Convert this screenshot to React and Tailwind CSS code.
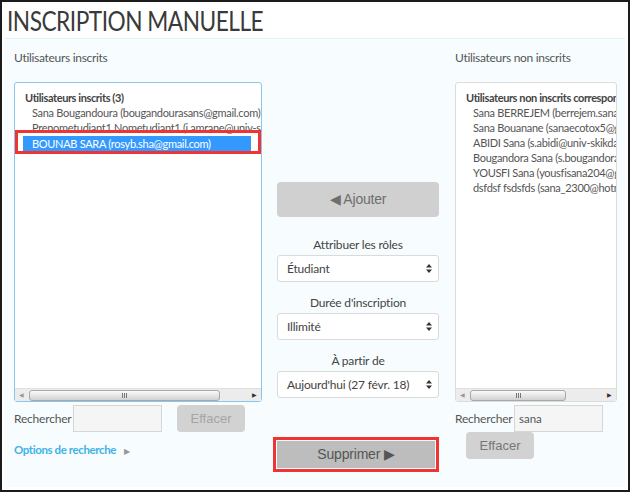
import React from 'react'

const font = { fontFamily: 'Lato, "Open Sans", sans-serif' }
const btnFont = { fontFamily: '"Liberation Sans", Arial, sans-serif' }

function Scrollbar({ thumbLeft, thumbWidth }) {
  return (
    <div className="absolute left-0 right-0 bottom-0 h-[13px] bg-[#ececec] border-t border-[#e0e0e0]">
      <span className="absolute left-[4px] top-[3px] text-[6px] text-[#999] leading-none">◀</span>
      <div
        className="absolute top-[1px] h-[11px] rounded-[3px] border border-[#a8a8a8] bg-gradient-to-b from-[#fbfbfb] to-[#d2d2d2] flex items-center justify-center"
        style={{ left: thumbLeft, width: thumbWidth }}
      >
        <div className="flex gap-[1px]">
          <div className="w-[1px] h-[5px] bg-[#777]" />
          <div className="w-[1px] h-[5px] bg-[#777]" />
          <div className="w-[1px] h-[5px] bg-[#777]" />
        </div>
      </div>
      <span className="absolute right-[4px] top-[3px] text-[6px] text-[#333] leading-none">▶</span>
    </div>
  )
}

function ListBox({ title, items, selected, focused, boxed, thumbLeft, thumbWidth }) {
  return (
    <div
      className={`relative h-[320px] bg-white rounded-[3px] border ${
        focused ? 'border-[#8cc4ec]' : 'border-[#dcdcdc]'
      }`}
    >
      <div className="overflow-hidden h-full pt-[7px]">
        <div className="pl-[10px] whitespace-nowrap text-[11px] leading-[15px] font-bold tracking-[-0.4px] text-[#444]">{title}</div>
        {items.map((it, i) => (
          <div
            key={i}
            className={`whitespace-nowrap text-[11px] tracking-[-0.3px] leading-[15px] ${
              i === selected
                ? 'ml-[8px] mr-[10px] pl-[9px] bg-[#3399ff] text-white h-[16px] mt-[1px]'
                : 'pl-[17px] text-[#555]'
            }`}
          >
            {it}
          </div>
        ))}
      </div>
      {boxed && (
        <div className="absolute left-[0px] top-[47px] w-[246px] h-[24px] border-[3px] border-[#f03434]" />
      )}
      <Scrollbar thumbLeft={thumbLeft} thumbWidth={thumbWidth} />
    </div>
  )
}

function UpDown() {
  return (
    <svg width="6" height="9" viewBox="0 0 6 9" className="shrink-0">
      <path d="M3 0L6 3.5H0z M3 9L0 5.5H6z" fill="#333" />
    </svg>
  )
}

function Select({ value }) {
  return (
    <div className="h-[27px] bg-white border border-[#dadada] rounded-[3px] flex items-center justify-between pl-[9px] pr-[6px] text-[12px] tracking-[-0.2px] text-[#444]">
      <span>{value}</span>
      <UpDown />
    </div>
  )
}

export default function App() {
  return (
    <div className="w-[630px] h-[492px] bg-white border-2 border-[#1b1b1b] flex flex-col overflow-hidden" style={font}>
      {/* Title */}
      <div className="h-[36px] pl-[5px] flex items-center">
        <h1 className="text-[27px] text-[#3a3a3a] tracking-[-0.6px] leading-none origin-left scale-x-[0.84] whitespace-nowrap">
          INSCRIPTION MANUELLE
        </h1>
      </div>

      {/* Panel */}
      <div className="mx-[3px] mb-[3px] flex-1 bg-[#f7fdfe] border-t border-[#e4f1f5] flex pl-[9px] overflow-hidden">
        {/* Left column */}
        <div className="w-[248px] shrink-0 pt-[11px]">
          <div className="text-[12px] tracking-[-0.3px] text-[#555] leading-[16px]">Utilisateurs inscrits</div>
          <div className="mt-[16px]">
            <ListBox
              title="Utilisateurs inscrits (3)"
              items={[
                'Sana Bougandoura (bougandourasans@gmail.com)',
                'Prenometudiant1 Nometudiant1 (i.amrane@univ-skikda.dz)',
                'BOUNAB SARA (rosyb.sha@gmail.com)',
              ]}
              selected={2}
              focused
              boxed
              thumbLeft={14}
              thumbWidth={191}
            />
          </div>
          <div className="flex items-center mt-[3px]">
            <span className="text-[12px] tracking-[-0.2px] text-[#555] w-[59px]">Rechercher</span>
            <div className="w-[89px] h-[27px] bg-[#f5f5f5] border border-[#d6d6d6]" />
            <button className="ml-[15px] w-[68px] h-[27px] rounded-[4px] bg-[#d2d2d2] text-[13px] text-[#a5a5a5]" style={btnFont}>
              Effacer
            </button>
          </div>
          <div className="flex items-center mt-[9px] gap-[8px]">
            <span className="text-[11.5px] font-bold tracking-[-0.4px] text-[#3fb2e6]">Options de recherche</span>
            <span className="text-[8px] text-[#999] mt-[2px]">▶</span>
          </div>
        </div>

        {/* Middle column */}
        <div className="w-[162px] shrink-0 ml-[15px] pt-[143px] flex flex-col text-[12px] tracking-[-0.2px] text-[#444]">
          <button className="h-[35px] rounded-[4px] bg-[#d0d0d0] text-[14px] text-[#6e6e6e]" style={btnFont}>
            ◀ Ajouter
          </button>
          <div className="text-center mt-[20px] leading-[16px]">Attribuer les rôles</div>
          <div className="mt-[2px]"><Select value="Étudiant" /></div>
          <div className="text-center mt-[13px] leading-[16px]">Durée d'inscription</div>
          <div className="mt-[2px]"><Select value="Illimité" /></div>
          <div className="text-center mt-[13px] leading-[16px]">À partir de</div>
          <div className="mt-[2px]"><Select value="Aujourd'hui (27 févr. 18)" /></div>
          <div className="relative mt-[43px] h-[27px]">
            <div className="absolute -left-[4px] -top-[4px] w-[166px] h-[35px] border-[3px] border-[#f03434]" />
            <button className="w-[158px] h-[27px] bg-[#bdbdbd] text-[14px] text-[#555]" style={btnFont}>
              Supprimer ▶
            </button>
          </div>
        </div>

        {/* Right column */}
        <div className="w-[170px] shrink-0 ml-[16px] pt-[11px]">
          <div className="text-[12px] tracking-[-0.3px] text-[#555] leading-[16px]">Utilisateurs non inscrits</div>
          <div className="mt-[16px] w-[162px]">
            <ListBox
              title="Utilisateurs non inscrits correspondant à « sana » (6)"
              items={[
                'Sana BERREJEM (berrejem.sana@gmail.com)',
                'Sana Bouanane (sanaecotox5@gmail.com)',
                'ABIDI Sana (s.abidi@univ-skikda.dz)',
                'Bougandora Sana (s.bougandora@gmail.com)',
                'YOUSFI Sana (yousfisana204@gmail.com)',
                'dsfdsf fsdsfds (sana_2300@hotmail.com)',
              ]}
              selected={-1}
              thumbLeft={14}
              thumbWidth={96}
            />
          </div>
          <div className="flex items-center mt-[3px]">
            <span className="text-[12px] tracking-[-0.2px] text-[#555] w-[59px]">Rechercher</span>
            <div className="w-[89px] h-[27px] bg-[#f5f5f5] border border-[#d6d6d6] flex items-center pl-[4px] text-[11.5px] text-[#555]">
              sana
            </div>
          </div>
          <button className="ml-[11px] w-[68px] h-[27px] rounded-[4px] bg-[#d2d2d2] text-[13px] text-[#777]" style={btnFont}>
            Effacer
          </button>
        </div>
      </div>
    </div>
  )
}
